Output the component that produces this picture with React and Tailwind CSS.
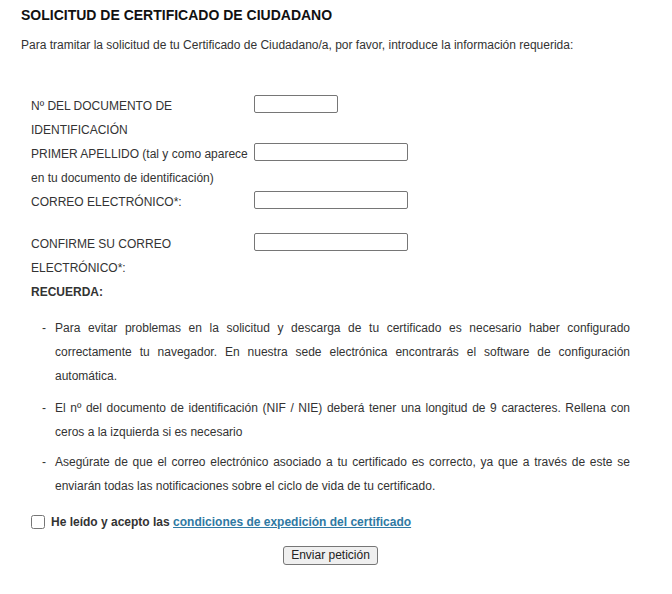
import { useState } from "react"

const rows = [
    { lines: ["Nº DEL DOCUMENTO DE", "IDENTIFICACIÓN"], width: "w-[84px]", height: "h-[48px]" },
    { lines: ["PRIMER APELLIDO (tal y como aparece", "en tu documento de identificación)"], width: "w-[154px]", height: "h-[48px]" },
    { lines: ["CORREO ELECTRÓNICO*:"], width: "w-[154px]", height: "h-[42px]" },
    { lines: ["CONFIRME SU CORREO", "ELECTRÓNICO*:"], width: "w-[154px]", height: "h-[48px]" },
]

const notes = [
    {
        text: "Para evitar problemas en la solicitud y descarga de tu certificado es necesario haber configurado correctamente tu navegador. En nuestra sede electrónica encontrarás el software de configuración automática.",
        gap: "mt-0",
    },
    {
        text: "El nº del documento de identificación (NIF / NIE) deberá tener una longitud de 9 caracteres. Rellena con ceros a la izquierda si es necesario",
        gap: "mt-[8px]",
    },
    {
        text: "Asegúrate de que el correo electrónico asociado a tu certificado es correcto, ya que a través de este se enviarán todas las notificaciones sobre el ciclo de vida de tu certificado.",
        gap: "mt-[6px]",
    },
]

export default function App() {
    const [accepted, setAccepted] = useState(false)

    return (
        <div className="w-[672px] h-[594px] bg-white px-[21px] font-['Liberation_Sans',Arial,sans-serif] text-[12px] text-[#333]">
            <h1 className="pt-[5px] text-[14px] leading-[20px] font-bold text-[#111]">
                SOLICITUD DE CERTIFICADO DE CIUDADANO
            </h1>
            <p className="mt-[10px] leading-[20px]">
                Para tramitar la solicitud de tu Certificado de Ciudadano/a, por favor, introduce la información requerida:
            </p>

            <form className="mt-[39px] pl-[10px]" onSubmit={(e) => e.preventDefault()}>
                {rows.map((row, idx) => (
                    <div key={idx} className={`flex items-start ${row.height}`}>
                        <label className="w-[223px] leading-[24px]">
                            {row.lines.map((l) => (
                                <span key={l} className="block">{l}</span>
                            ))}
                        </label>
                        <input
                            type="text"
                            className={`mt-[1px] h-[18px] ${row.width} border border-[#767676] rounded-[2px] bg-white px-1 text-[12px] outline-none`}
                        />
                    </div>
                ))}

                <p className="leading-[24px] font-bold">RECUERDA:</p>

                <ul className="mt-[12px] pl-[11px] pr-[21px]">
                    {notes.map((n, idx) => (
                        <li key={idx} className={`flex leading-[24px] ${n.gap}`}>
                            <span className="w-[13px] shrink-0">-</span>
                            <span className="text-justify">{n.text}</span>
                        </li>
                    ))}
                </ul>

                <label className="mt-[12px] flex items-center gap-[6px] leading-[24px] font-bold">
                    <input
                        type="checkbox"
                        checked={accepted}
                        onChange={(e) => setAccepted(e.target.checked)}
                        className="m-0 w-[14px] h-[14px]"
                    />
                    <span>
                        He leído y acepto las{" "}
                        <a href="#" className="text-[#2f79a3] underline">
                            condiciones de expedición del certificado
                        </a>
                    </span>
                </label>

                <div className="mt-[12px] flex justify-center pr-[21px]">
                    <button
                        type="submit"
                        className="h-[19px] px-[7px] border border-[#767676] rounded-[3px] bg-[#efefef] text-[12px] leading-[17px] text-[#222]"
                    >
                        Enviar petición
                    </button>
                </div>
            </form>
        </div>
    )
}
